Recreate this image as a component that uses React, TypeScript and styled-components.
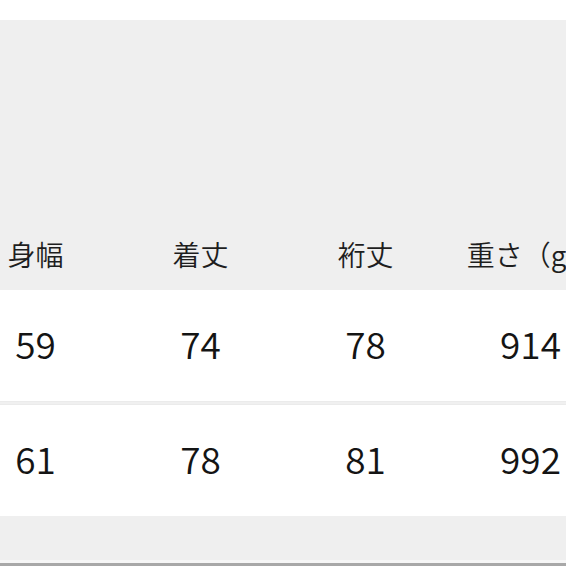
import React from "react";
import styled, { createGlobalStyle } from "styled-components";

const Global = createGlobalStyle`
  html, body {
    margin: 0;
    padding: 0;
    background: #ffffff;
  }
  body {
    width: 566px;
    height: 566px;
    overflow: hidden;
    font-family: "Noto Sans CJK JP", "Noto Sans", sans-serif;
    color: #1a1a1a;
  }
`;

const Page = styled.div`
  width: 566px;
  height: 566px;
  overflow: hidden;
  padding-top: 20px;
  box-sizing: border-box;
  display: flex;
  flex-direction: column;
`;

const Table = styled.div`
  margin-left: -47px;
  display: flex;
  flex-direction: column;
`;

const HeadBlock = styled.div`
  background: #efefef;
  height: 270px;
  display: flex;
  flex-direction: column;
  justify-content: flex-end;
`;

const Row = styled.div<{ $height: number; $bg: string }>`
  display: grid;
  grid-template-columns: repeat(5, 165px);
  height: ${(p) => p.$height}px;
  background: ${(p) => p.$bg};
  align-items: center;
`;

const HeadCell = styled.div`
  text-align: center;
  font-size: 28px;
  font-weight: 350;
  line-height: 1;
  color: #1e1e1e;
  white-space: nowrap;
  margin-top: -2px;
`;

const NumCell = styled.div`
  text-align: center;
  font-size: 37px;
  font-weight: 350;
  line-height: 1;
  color: #141414;
  white-space: nowrap;
  margin-top: -4px;
`;

const Separator = styled.div`
  height: 4px;
  background: #f0f0f0;
  border-top: 1px solid #ebebeb;
  border-bottom: 1px solid #ebebeb;
  box-sizing: border-box;
`;

const Footer = styled.div`
  background: #efefef;
  height: 44px;
`;

const FooterLight = styled.div`
  height: 3px;
  background: #f6f6f6;
`;

const FooterDark = styled.div`
  height: 3px;
  background: #a8a8a8;
`;

const headers = ["身幅", "着丈", "裄丈", "重さ（g）", ""];
const rows = [
  ["59", "74", "78", "914", ""],
  ["61", "78", "81", "992", ""],
];

export default function App() {
  return (
    <>
      <Global />
      <Page>
        <Table>
          <HeadBlock>
            <Row $height={70} $bg="#efefef">
              {headers.map((h, i) => (
                <HeadCell key={i}>{h}</HeadCell>
              ))}
            </Row>
          </HeadBlock>
          <Row $height={111} $bg="#ffffff">
            {rows[0].map((v, i) => (
              <NumCell key={i}>{v}</NumCell>
            ))}
          </Row>
          <Separator />
          <Row $height={111} $bg="#ffffff">
            {rows[1].map((v, i) => (
              <NumCell key={i}>{v}</NumCell>
            ))}
          </Row>
          <Footer />
          <FooterLight />
          <FooterDark />
        </Table>
      </Page>
    </>
  );
}
